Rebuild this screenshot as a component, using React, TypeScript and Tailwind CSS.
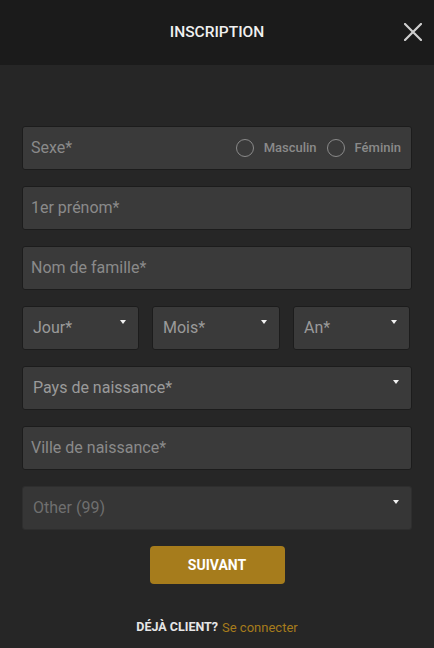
const font = { fontFamily: 'Roboto, "Liberation Sans", Arial, sans-serif' };

function Caret() {
  return (
    <svg width="6" height="4" viewBox="0 0 6 4" className="shrink-0">
      <path d="M0 0h6L3 4z" fill="#f2f2f2" />
    </svg>
  );
}

function CloseIcon() {
  return (
    <svg width="18" height="18" viewBox="0 0 18 18">
      <path d="M1 1L17 17M17 1L1 17" stroke="#cfcfcf" strokeWidth="2.2" strokeLinecap="square" />
    </svg>
  );
}

function TextField({ label }: { label: string }) {
  return (
    <div className="flex h-[44px] items-center rounded-[3px] border border-[#1c1c1c] bg-[#3a3a3a] pl-[8px] text-[16px] text-[#8a8a8a]">
      {label}
    </div>
  );
}

function SelectField({ label, className = '', disabled = false }: { label: string; className?: string; disabled?: boolean }) {
  return (
    <div
      className={
        'flex h-[44px] items-center justify-between rounded-[3px] border pl-[10px] pr-[12px] text-[16px] ' +
        (disabled
          ? 'border-[#2e2e2e] bg-[#363636] text-[#6f6f6f] '
          : 'border-[#1c1c1c] bg-[#3a3a3a] text-[#9a9a9a] ') +
        className
      }
    >
      <span>{label}</span>
      <span className="-mt-[13px]">
        <Caret />
      </span>
    </div>
  );
}

function Radio({ label }: { label: string }) {
  return (
    <div className="flex items-center gap-[10px]">
      <span className="h-[18px] w-[18px] rounded-full border border-[#8a8a8a]" />
      <span className="text-[13px] font-medium text-[#8a8a8a]">{label}</span>
    </div>
  );
}

export default function App() {
  return (
    <div className="flex h-[648px] w-[434px] flex-col bg-[#262626]" style={font}>
      <div className="relative flex h-[65px] shrink-0 items-center justify-center bg-[#1b1b1b]">
        <span className="text-[15.5px] font-medium text-[#f0f0f0]">INSCRIPTION</span>
        <button className="absolute right-[12px] top-[23px]">
          <CloseIcon />
        </button>
      </div>

      <div className="flex flex-col gap-[16px] px-[22px] pt-[61px]">
        <div className="flex h-[44px] items-center justify-between rounded-[3px] border border-[#1c1c1c] bg-[#3a3a3a] pl-[8px] pr-[10px]">
          <span className="text-[16px] text-[#8a8a8a]">Sexe*</span>
          <div className="flex items-center gap-[10px]">
            <Radio label="Masculin" />
            <Radio label="Féminin" />
          </div>
        </div>

        <TextField label="1er prénom*" />
        <TextField label="Nom de famille*" />

        <div className="flex gap-[13px]">
          <SelectField label="Jour*" className="w-[117px]" />
          <SelectField label="Mois*" className="w-[128px]" />
          <SelectField label="An*" className="w-[117px]" />
        </div>

        <SelectField label="Pays de naissance*" />
        <TextField label="Ville de naissance*" />
        <SelectField label="Other (99)" disabled />

        <div className="flex justify-center">
          <button className="h-[38px] w-[135px] rounded-[4px] bg-[#a67c1c] text-[14px] font-bold text-white">
            SUIVANT
          </button>
        </div>
      </div>

      <div className="mt-[34px] flex items-center justify-center gap-[4px] text-[12.5px]">
        <span className="font-bold text-[#e6e6e6]">DÉJÀ CLIENT?</span>
        <span className="text-[13px] text-[#a67c1c]">Se connecter</span>
      </div>
    </div>
  );
}
